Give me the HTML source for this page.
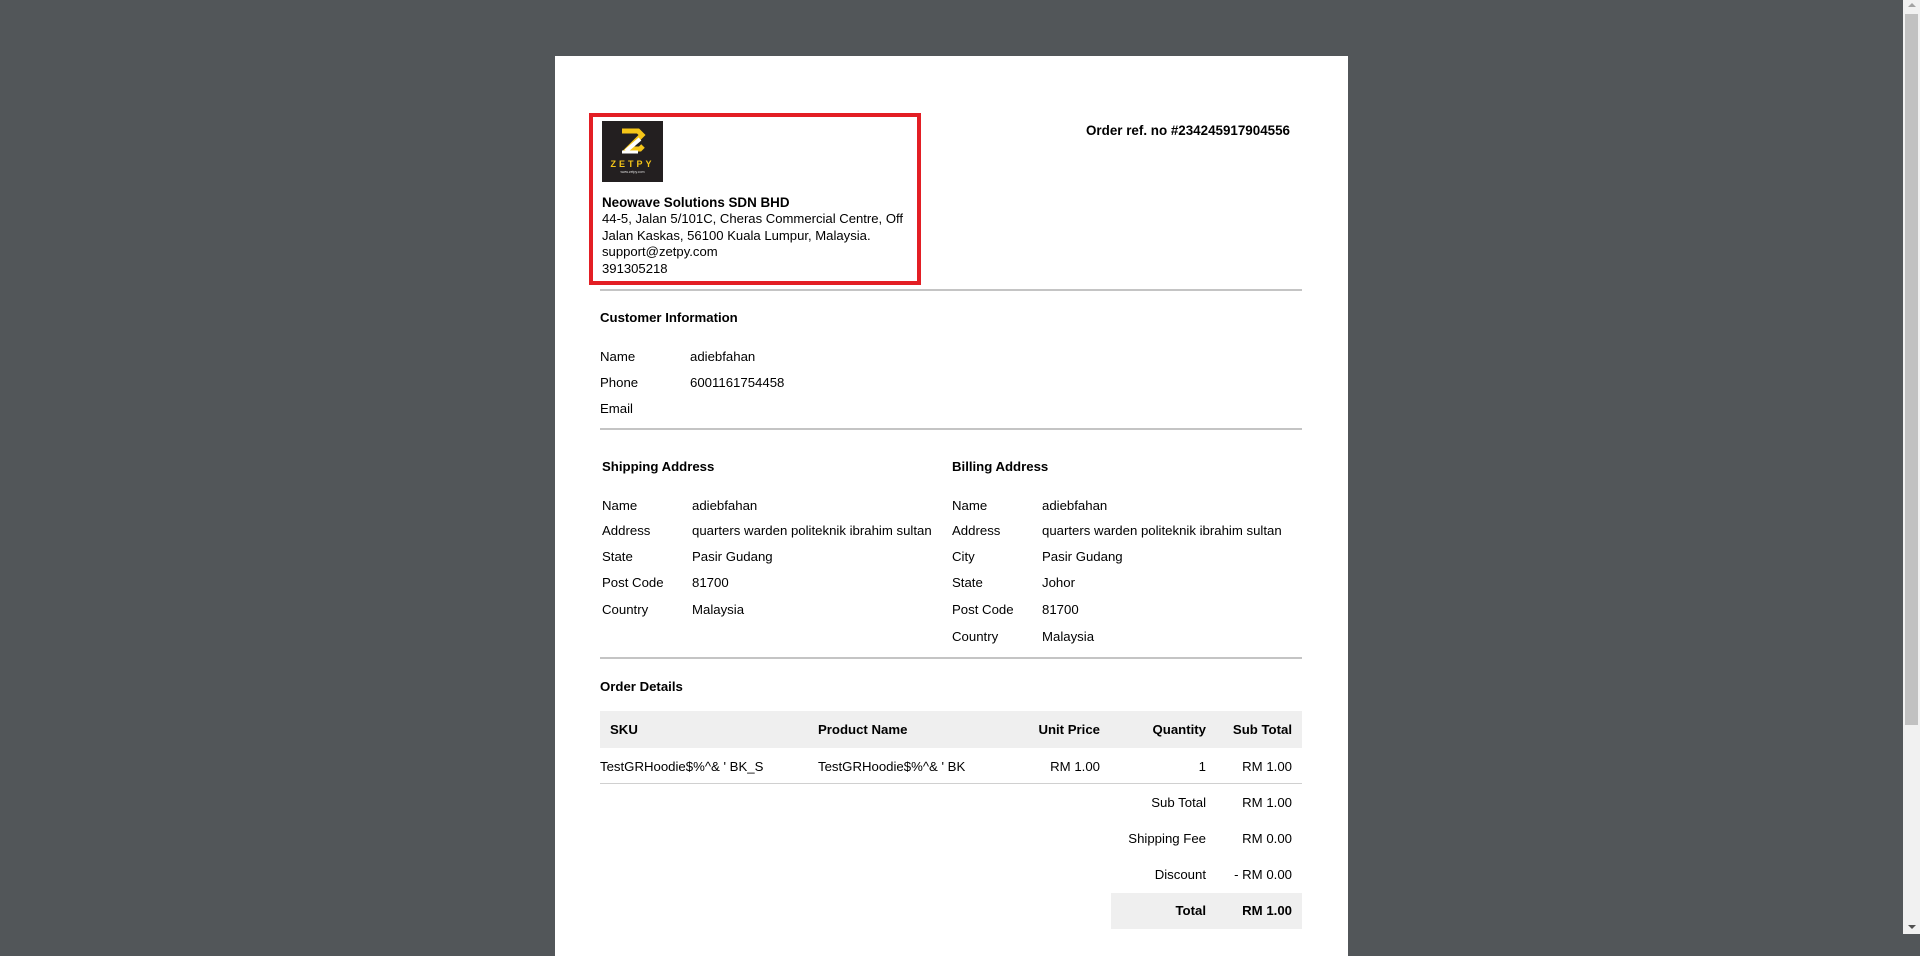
<!DOCTYPE html>
<html><head><meta charset="utf-8"><style>
html,body{margin:0;padding:0;width:1920px;height:934px;overflow:hidden;background:#525659;font-family:"Liberation Sans",Arial,sans-serif;color:#000}
.page{position:absolute;left:555px;top:56px;width:793px;height:900px;background:#fff}
.t{position:absolute;font-size:13.2px;line-height:16px;white-space:nowrap}
.b{font-weight:bold}
.r{text-align:right}
.hr{position:absolute;left:600px;width:702px;height:2px;background:#c4c4c4}
.sb{position:absolute;left:1903px;top:0;width:17px;height:934px;background:#f1f1f1}
</style></head><body>
<div class="page"></div>
<div class="sb"><div style="position:absolute;left:2px;top:14px;width:13px;height:711px;background:#c1c1c1"></div>
<div style="position:absolute;left:5px;top:3px;width:0;height:0;border-left:4px solid transparent;border-right:4px solid transparent;border-bottom:4px solid #a3a3a3"></div>
<div style="position:absolute;left:5px;top:925px;width:0;height:0;border-left:4px solid transparent;border-right:4px solid transparent;border-top:4px solid #505050"></div></div>

<div style="position:absolute;left:589px;top:113px;width:324px;height:164px;border:4px solid #e31e24"></div>
<div style="position:absolute;left:602px;top:121px;width:61px;height:61px;background:#231f20">
<svg width="61" height="61" viewBox="0 0 61 61"><path d="M20 10h16l4 4-14 14h12l3-3" fill="none" stroke="#f5c518" stroke-width="5"/><path d="M24 30l14-12" stroke="#fff" stroke-width="4"/><path d="M20 31h16" stroke="#fff" stroke-width="3"/>
<text x="30.5" y="46" font-family="Liberation Sans" font-weight="bold" font-size="9" fill="#f5c518" text-anchor="middle" letter-spacing="3">ZETPY</text>
<text x="30.5" y="52" font-family="Liberation Sans" font-size="3.5" fill="#ddd" text-anchor="middle">www.zetpy.com</text></svg></div>
<div class="t b" style="left:602px;top:195px;font-size:13.4px">Neowave Solutions SDN BHD</div>
<div class="t" style="left:602px;top:211px;line-height:16.5px;font-size:13.1px">44-5, Jalan 5/101C, Cheras Commercial Centre, Off<br>Jalan Kaskas, 56100 Kuala Lumpur, Malaysia.<br>support@zetpy.com<br>391305218</div>
<div class="t b r" style="left:1000px;width:290px;top:123px;font-size:13.4px">Order ref. no #234245917904556</div>
<div class="hr" style="top:289px"></div>

<div class="t b" style="left:600px;top:310px">Customer Information</div>
<div class="t" style="left:600px;top:349px">Name</div><div class="t" style="left:690px;top:349px">adiebfahan</div>
<div class="t" style="left:600px;top:375px">Phone</div><div class="t" style="left:690px;top:375px">6001161754458</div>
<div class="t" style="left:600px;top:401px">Email</div>
<div class="hr" style="top:428px"></div>

<div class="t b" style="left:602px;top:459px">Shipping Address</div>
<div class="t" style="left:602px;top:498px">Name</div><div class="t" style="left:692px;top:498px">adiebfahan</div>
<div class="t" style="left:602px;top:523px">Address</div><div class="t" style="left:692px;top:523px">quarters warden politeknik ibrahim sultan</div>
<div class="t" style="left:602px;top:549px">State</div><div class="t" style="left:692px;top:549px">Pasir Gudang</div>
<div class="t" style="left:602px;top:575px">Post Code</div><div class="t" style="left:692px;top:575px">81700</div>
<div class="t" style="left:602px;top:602px">Country</div><div class="t" style="left:692px;top:602px">Malaysia</div>

<div class="t b" style="left:952px;top:459px">Billing Address</div>
<div class="t" style="left:952px;top:498px">Name</div><div class="t" style="left:1042px;top:498px">adiebfahan</div>
<div class="t" style="left:952px;top:523px">Address</div><div class="t" style="left:1042px;top:523px">quarters warden politeknik ibrahim sultan</div>
<div class="t" style="left:952px;top:549px">City</div><div class="t" style="left:1042px;top:549px">Pasir Gudang</div>
<div class="t" style="left:952px;top:575px">State</div><div class="t" style="left:1042px;top:575px">Johor</div>
<div class="t" style="left:952px;top:602px">Post Code</div><div class="t" style="left:1042px;top:602px">81700</div>
<div class="t" style="left:952px;top:629px">Country</div><div class="t" style="left:1042px;top:629px">Malaysia</div>
<div class="hr" style="top:657px"></div>

<div class="t b" style="left:600px;top:679px">Order Details</div>
<div style="position:absolute;left:600px;top:711px;width:702px;height:37px;background:#efefef"></div>
<div class="t b" style="left:610px;top:722px">SKU</div>
<div class="t b" style="left:818px;top:722px">Product Name</div>
<div class="t b r" style="left:1000px;width:100px;top:722px">Unit Price</div>
<div class="t b r" style="left:1106px;width:100px;top:722px">Quantity</div>
<div class="t b r" style="left:1192px;width:100px;top:722px">Sub Total</div>
<div class="t" style="left:600px;top:759px">TestGRHoodie$%^&amp; ' BK_S</div>
<div class="t" style="left:818px;top:759px">TestGRHoodie$%^&amp; ' BK</div>
<div class="t r" style="left:1000px;width:100px;top:759px">RM 1.00</div>
<div class="t r" style="left:1106px;width:100px;top:759px">1</div>
<div class="t r" style="left:1192px;width:100px;top:759px">RM 1.00</div>
<div class="hr" style="top:783px;height:1px;background:#d0d0d0"></div>
<div class="t r" style="left:1056px;width:150px;top:795px">Sub Total</div><div class="t r" style="left:1192px;width:100px;top:795px">RM 1.00</div>
<div class="t r" style="left:1056px;width:150px;top:831px">Shipping Fee</div><div class="t r" style="left:1192px;width:100px;top:831px">RM 0.00</div>
<div class="t r" style="left:1056px;width:150px;top:867px">Discount</div><div class="t r" style="left:1192px;width:100px;top:867px">- RM 0.00</div>
<div style="position:absolute;left:1111px;top:893px;width:191px;height:36px;background:#efefef"></div>
<div class="t b r" style="left:1056px;width:150px;top:903px">Total</div><div class="t b r" style="left:1192px;width:100px;top:903px">RM 1.00</div>
</body></html>
